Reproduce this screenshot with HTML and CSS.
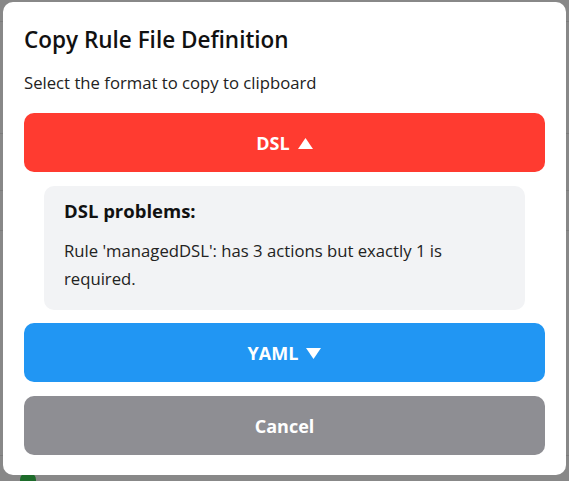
FILE: index.html
```html
<!DOCTYPE html>
<html lang="en">
<head>
    <meta charset="UTF-8">
    <meta name="viewport" content="width=device-width, initial-scale=1.0">
    <title>Copy Rule File Definition</title>
    <link rel="stylesheet" href="styles.css">
</head>
<body>
    <div class="backdrop">
        <div class="bg-line" style="top: 21px"></div>
        <div class="bg-line" style="top: 133px"></div>
        <div class="bg-line" style="top: 190px"></div>
        <div class="bg-line" style="top: 230px"></div>
        <div class="bg-line" style="top: 455px"></div>
        <span class="bg-dot"></span>
    </div>

    <div class="dialog">
        <h2>Copy Rule File Definition</h2>
        <p class="subtitle">Select the format to copy to clipboard</p>

        <button class="btn btn-red">DSL
            <svg class="arrow" width="15" height="11" viewBox="0 0 15 11"><polygon points="7.5,0 15,11 0,11" fill="white"/></svg>
        </button>

        <div class="problems">
            <h3>DSL problems:</h3>
            <p>Rule 'managedDSL': has 3 actions but exactly 1 is required.</p>
        </div>

        <button class="btn btn-blue">YAML
            <svg class="arrow" width="15" height="11" viewBox="0 0 15 11"><polygon points="0,0 15,0 7.5,11" fill="white"/></svg>
        </button>
        <button class="btn btn-gray">Cancel</button>
    </div>
</body>
</html>
```

FILE: styles.css
```css
body {
    margin: 0;
    padding: 0;
    width: 569px;
    height: 481px;
    overflow: hidden;
    font-family: "Open Sans", "Noto Sans", sans-serif;
    background-color: #888888;
    position: relative;
}
.backdrop {
    position: absolute;
    inset: 0;
}
.bg-line {
    position: absolute;
    left: 0;
    right: 0;
    height: 1px;
    background-color: #7c7c7c;
}
.bg-dot {
    position: absolute;
    left: 20px;
    top: 472px;
    width: 16px;
    height: 16px;
    border-radius: 50%;
    background-color: #1d6b2a;
}
.dialog {
    position: absolute;
    left: 3px;
    top: 2px;
    width: 563px;
    height: 473px;
    box-sizing: border-box;
    background: white;
    border-radius: 10px;
    padding: 23px 21px 20px;
    display: flex;
    flex-direction: column;
}
h2 {
    margin: 0;
    font-size: 22.5px;
    font-weight: 600;
    color: #111;
    line-height: 30px;
}
.subtitle {
    margin: 16px 0 18px;
    font-size: 16.7px;
    line-height: 24px;
    color: #222;
}
.btn {
    height: 59px;
    flex-shrink: 0;
    border: none;
    border-radius: 10px;
    color: white;
    font-family: inherit;
    font-size: 18px;
    font-weight: 700;
    cursor: pointer;
    display: flex;
    align-items: center;
    justify-content: center;
    gap: 8px;
}
.arrow {
    margin-top: 1px;
}
.btn-red {
    background-color: #ff3b30;
}
.btn-blue {
    background-color: #2196f3;
    margin-top: 13px;
}
.btn-gray {
    background-color: #8e8e93;
    margin-top: 14px;
}
.problems {
    margin: 14px 20px 0;
    padding: 12px 20px 17px;
    background-color: #f2f3f5;
    border-radius: 10px;
}
.problems h3 {
    margin: 0 0 13px;
    font-size: 18.5px;
    font-weight: 700;
    line-height: 26px;
    color: #111;
}
.problems p {
    margin: 0;
    font-size: 16.7px;
    line-height: 28px;
    color: #222;
}
```
